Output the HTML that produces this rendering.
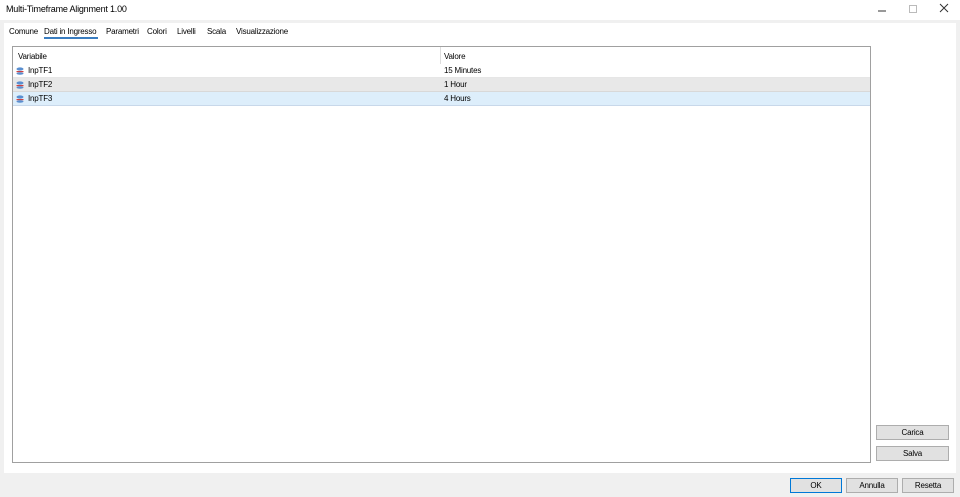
<!DOCTYPE html>
<html><head><meta charset="utf-8"><style>
*{margin:0;padding:0;box-sizing:border-box}
body{width:960px;height:497px;background:#f0f0f0;font-family:"Liberation Sans",sans-serif;font-size:8px;color:#000;position:relative;overflow:hidden;letter-spacing:-0.2px}
.abs{position:absolute}
#title{left:0;top:0;width:960px;height:20px;background:#fff}
#title span{position:absolute;left:6px;top:4px;font-size:9px}
#panel{left:4px;top:23px;width:952px;height:450px;background:#fff}
.tab{position:absolute;top:27px;font-size:8px}
#tbl{left:12px;top:46px;width:859px;height:417px;border:1px solid #a0a0a0;background:#fff}
.row{position:absolute;left:0;width:857px;height:14px}
.row span{position:absolute;top:2px}
.btn{position:absolute;height:15px;background:#e1e1e1;border:1px solid #adadad;text-align:center;line-height:13px;font-size:8px}
.ic{position:absolute;left:3px;top:3px;width:8px;height:8px}
</style></head><body>
<div id="title" class="abs"><span>Multi-Timeframe Alignment 1.00</span>
<svg class="abs" style="left:876px;top:4px" width="12" height="12"><line x1="2" y1="7" x2="10" y2="7" stroke="#333"/></svg>
<svg class="abs" style="left:907px;top:3px" width="12" height="12"><rect x="2.5" y="2.5" width="7" height="7" fill="none" stroke="#bbb"/></svg>
<svg class="abs" style="left:938px;top:2px" width="12" height="12"><path d="M2 2L10 10M10 2L2 10" stroke="#333"/></svg>
</div>
<div id="panel" class="abs"></div>
<div class="tab" style="left:9px">Comune</div>
<div class="tab" style="left:44px">Dati in Ingresso</div>
<div class="abs" style="left:44px;top:37px;width:54px;height:2px;background:#3a7dc0"></div>
<div class="tab" style="left:106px">Parametri</div>
<div class="tab" style="left:147px">Colori</div>
<div class="tab" style="left:177px">Livelli</div>
<div class="tab" style="left:207px">Scala</div>
<div class="tab" style="left:236px">Visualizzazione</div>
<div id="tbl" class="abs">
 <div class="abs" style="left:427px;top:0;width:1px;height:17px;background:#ddd"></div>
 <div class="row" style="top:0;height:17px"><span style="left:5px;top:5px">Variabile</span><span style="left:431px;top:5px">Valore</span></div>
 <div class="row" style="top:17px;border-bottom:1px solid #e6e6e6"><svg class="ic" viewBox="0 0 8 8"><ellipse cx="4" cy="2" rx="3.5" ry="1.6" fill="#5a8fd0"/><rect x="0.5" y="4" width="7" height="1.2" fill="#d04040"/><ellipse cx="4" cy="6.5" rx="3.5" ry="1.2" fill="#5a8fd0"/></svg><span style="left:15px">InpTF1</span><span style="left:431px">15 Minutes</span></div>
 <div class="row" style="top:31px;background:#e8e8e8;border-bottom:1px solid #d8d8d8"><svg class="ic" viewBox="0 0 8 8"><ellipse cx="4" cy="2" rx="3.5" ry="1.6" fill="#5a8fd0"/><rect x="0.5" y="4" width="7" height="1.2" fill="#d04040"/><ellipse cx="4" cy="6.5" rx="3.5" ry="1.2" fill="#5a8fd0"/></svg><span style="left:15px">InpTF2</span><span style="left:431px">1 Hour</span></div>
 <div class="row" style="top:45px;background:#ddeefb;border-bottom:1px solid #c8d8ea"><svg class="ic" viewBox="0 0 8 8"><ellipse cx="4" cy="2" rx="3.5" ry="1.6" fill="#5a8fd0"/><rect x="0.5" y="4" width="7" height="1.2" fill="#d04040"/><ellipse cx="4" cy="6.5" rx="3.5" ry="1.2" fill="#5a8fd0"/></svg><span style="left:15px">InpTF3</span><span style="left:431px">4 Hours</span></div>
</div>
<div class="btn" style="left:876px;top:425px;width:73px">Carica</div>
<div class="btn" style="left:876px;top:446px;width:73px">Salva</div>
<div class="btn" style="left:790px;top:478px;width:52px;border:1px solid #0078d7">OK</div>
<div class="btn" style="left:846px;top:478px;width:52px">Annulla</div>
<div class="btn" style="left:902px;top:478px;width:52px">Resetta</div>
</body></html>
